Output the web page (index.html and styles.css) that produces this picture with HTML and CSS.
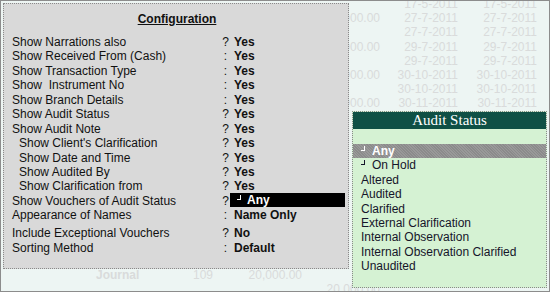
FILE: index.html
```html
<!DOCTYPE html>
<html lang="en">
  <head>
    <meta charset="UTF-8" />
    <title>Configuration - Audit Status</title>
    <link rel="stylesheet" href="styles.css">
  </head>
  <body>
    <div class="screen">
      <!-- faded voucher register behind the popups -->
      <div class="ledger">
        <div class="row"><span></span><span></span><span></span><span></span><span></span><span>17-5-2011</span><span>17-5-2011</span></div>
        <div class="row"><span></span><span></span><span></span><span></span><span>20,000.00</span><span>27-7-2011</span><span>27-7-2011</span></div>
        <div class="row"><span></span><span></span><span></span><span></span><span></span><span>27-7-2011</span><span>27-7-2011</span></div>
        <div class="row"><span></span><span></span><span></span><span></span><span>20,000.00</span><span>29-7-2011</span><span>29-7-2011</span></div>
        <div class="row"><span></span><span></span><span></span><span></span><span></span><span>29-7-2011</span><span>29-7-2011</span></div>
        <div class="row"><span></span><span></span><span></span><span></span><span>20,000.00</span><span>30-10-2011</span><span>30-10-2011</span></div>
        <div class="row"><span></span><span></span><span></span><span></span><span></span><span>30-10-2011</span><span>30-10-2011</span></div>
        <div class="row"><span></span><span></span><span></span><span></span><span>20,000.00</span><span>30-11-2011</span><span>30-11-2011</span></div>
        <div class="row gap"><span></span><span class="type">Journal</span><span>109</span><span class="num">20,000.00</span><span></span><span></span><span></span></div>
        <div class="row"><span></span><span></span><span></span><span></span><span>20,000.00</span><span></span><span></span></div>
      </div>

      <div class="config">
        <h1>Configuration</h1>
        <div class="line"><span class="label">Show Narrations also</span><span class="mark">?</span><span class="value">Yes</span></div>
        <div class="line"><span class="label">Show Received From (Cash)</span><span class="mark">:</span><span class="value">Yes</span></div>
        <div class="line"><span class="label">Show Transaction Type</span><span class="mark">:</span><span class="value">Yes</span></div>
        <div class="line"><span class="label">Show &nbsp;Instrument No</span><span class="mark">:</span><span class="value">Yes</span></div>
        <div class="line"><span class="label">Show Branch Details</span><span class="mark">:</span><span class="value">Yes</span></div>
        <div class="line"><span class="label">Show Audit Status</span><span class="mark">?</span><span class="value">Yes</span></div>
        <div class="line"><span class="label">Show Audit Note</span><span class="mark">?</span><span class="value">Yes</span></div>
        <div class="line sub"><span class="label">Show Client's Clarification</span><span class="mark">?</span><span class="value">Yes</span></div>
        <div class="line sub"><span class="label">Show Date and Time</span><span class="mark">?</span><span class="value">Yes</span></div>
        <div class="line sub"><span class="label">Show Audited By</span><span class="mark">?</span><span class="value">Yes</span></div>
        <div class="line sub"><span class="label">Show Clarification from</span><span class="mark">?</span><span class="value">Yes</span></div>
        <div class="line"><span class="label">Show Vouchers of Audit Status</span><span class="mark">?</span><span class="value selected"><i class="tick"></i>Any</span></div>
        <div class="line"><span class="label">Appearance of Names</span><span class="mark">:</span><span class="value">Name Only</span></div>
        <div class="line spaced"><span class="label">Include Exceptional Vouchers</span><span class="mark">?</span><span class="value">No</span></div>
        <div class="line"><span class="label">Sorting Method</span><span class="mark">:</span><span class="value">Default</span></div>
      </div>

      <div class="status">
        <div class="status-title">Audit Status</div>
        <ul class="status-list">
          <li class="current"><i class="tick"></i>Any</li>
          <li><i class="tick"></i>On Hold</li>
          <li>Altered</li>
          <li>Audited</li>
          <li>Clarified</li>
          <li>External Clarification</li>
          <li>Internal Observation</li>
          <li>Internal Observation Clarified</li>
          <li>Unaudited</li>
        </ul>
      </div>
    </div>
  </body>
</html>
```

FILE: styles.css
```css
* {
  margin: 0;
  padding: 0;
  box-sizing: border-box;
}
body {
  font-family: "Liberation Sans", Arial, sans-serif;
  font-size: 12px;
  color: #111;
}
.screen {
  position: relative;
  width: 550px;
  height: 292px;
  border: 1px solid #8c8c8c;
  background-color: #edf5f3;
  overflow: hidden;
}

/* background register */
.ledger {
  margin-top: -4px;
  color: #d9dbdb;
}
.row {
  display: grid;
  grid-template-columns: 95px 97px 30px 79px 78px 78px 79px;
  height: 14.2px;
  line-height: 14.2px;
}
.row span {
  text-align: right;
  white-space: nowrap;
}
.row span:nth-child(2),
.row span:nth-child(3) {
  text-align: left;
}
.row .type {
  font-weight: bold;
}
.row.gap {
  margin-top: 157px;
}

/* configuration popup */
.config {
  position: absolute;
  left: 2px;
  top: 2px;
  width: 346px;
  height: 266px;
  background-color: #d9d9d9;
  border: 1px dotted #8a8a8a;
  padding: 8px 0 0 8px;
}
.config h1 {
  font-size: 12px;
  text-align: center;
  text-decoration: underline;
  line-height: 14.4px;
  margin-bottom: 8.6px;
  padding-right: 6px;
}
.line {
  display: flex;
  height: 14.45px;
  line-height: 14.45px;
  white-space: nowrap;
}
.label {
  width: 209px;
}
.sub .label {
  padding-left: 7px;
}
.mark {
  width: 9px;
  text-align: center;
}
.value {
  padding-left: 4px;
  font-weight: bold;
}
.value.selected {
  width: 115px;
  height: 14px;
  margin-top: -1px;
  line-height: 15px;
  padding-left: 7px;
  background-color: #000;
  color: #fff;
}
.spaced {
  margin-top: 3.5px;
}
.tick {
  display: inline-block;
  width: 4px;
  height: 5px;
  border-right: 1px solid currentColor;
  border-bottom: 1px solid currentColor;
  vertical-align: top;
  margin-top: 2px;
  margin-right: 6px;
}

/* audit status list */
.status {
  position: absolute;
  left: 351px;
  top: 110px;
  width: 195px;
  height: 177px;
  background-color: #d5f2d3;
  border: 1px dotted #8a8a8a;
}
.status-title {
  height: 17px;
  line-height: 17px;
  background-color: #0f5045;
  color: #fff;
  text-align: center;
  font-family: "Liberation Serif", "Times New Roman", serif;
  font-size: 15px;
}
.status-list {
  list-style: none;
  margin-top: 15px;
}
.status-list li {
  height: 14.4px;
  line-height: 14.4px;
  padding-left: 8px;
  color: #15152a;
}
.status-list li.current {
  background-color: #8b8b8b;
  background-image: repeating-linear-gradient(45deg, rgba(255, 255, 255, 0.12) 0 1px, transparent 1px 2px);
  color: #fff;
  font-weight: bold;
}
.status-list li .tick {
  margin-right: 7px;
}
```
